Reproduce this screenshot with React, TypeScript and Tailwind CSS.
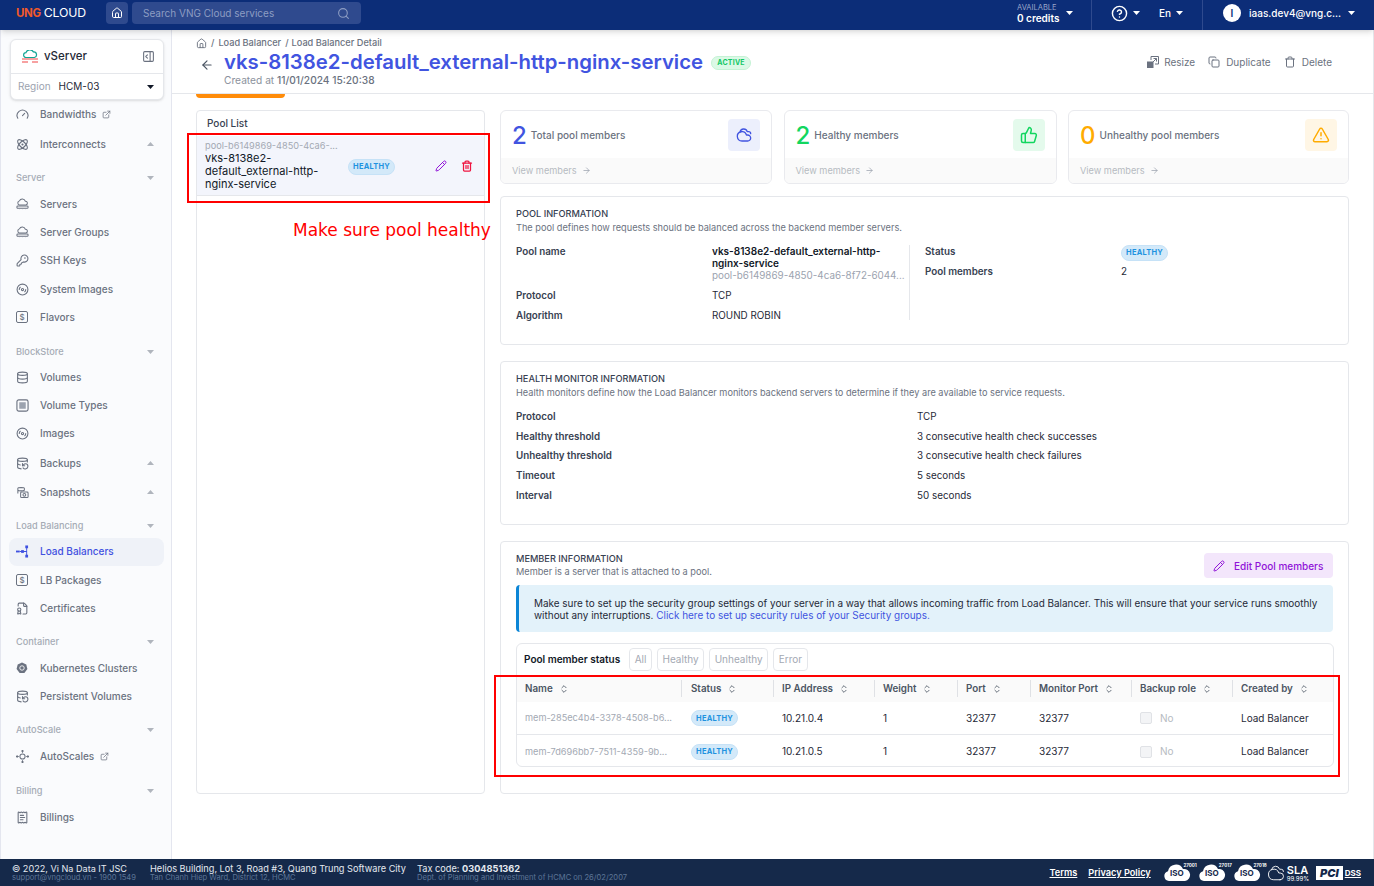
import {
  ArrowLeft,
  ArrowRight,
  Atom,
  ChevronsUpDown,
  CircleHelp,
  Cloudy,
  Copy,
  Database,
  DatabaseBackup,
  Disc3,
  ExternalLink,
  FileBadge,
  Gauge,
  House,
  KeyRound,
  PanelRightOpen,
  Pencil,
  ReceiptText,
  Search,
  ThumbsUp,
  Trash,
  Trash2,
  TriangleAlert,
} from "lucide-react";
import type { ReactNode } from "react";

function Caret({ up, className = "text-[#b0b5bd]" }: { up?: boolean; className?: string }) {
  return (
    <svg width="7" height="4" viewBox="0 0 7 4" className={className}>
      <path d={up ? "M3.5 0 7 4H0z" : "M0 0h7L3.5 4z"} fill="currentColor" />
    </svg>
  );
}

function DollarBox() {
  return (
    <span className="flex size-[12px] items-center justify-center rounded-[2px] border border-[#6b7280] text-[8px] leading-none">
      $
    </span>
  );
}

function CloudServer() {
  return (
    <svg width="13" height="13" viewBox="0 0 14 14" fill="none" stroke="currentColor" strokeWidth="1.1">
      <path d="M3.5 7.5a2.3 2.3 0 0 1 .2-4.4A3.4 3.4 0 0 1 10 3.4a2.1 2.1 0 0 1 .8 4.1z" />
      <rect x="1" y="8.5" width="12" height="2.6" rx="1" />
      <path d="M4 12.5h.1M7 12.5h.1M10 12.5h.1" />
    </svg>
  );
}

function LbIcon({ className = "" }: { className?: string }) {
  return (
    <svg width="13" height="13" viewBox="0 0 14 14" fill="currentColor" className={className}>
      <rect x="0" y="6" width="4" height="2" />
      <rect x="5.5" y="5.5" width="3" height="3" />
      <rect x="10" y="0.5" width="3" height="3" />
      <rect x="10" y="10.5" width="3" height="3" />
      <path d="M4 6.5h8v1H4zM11 3h1v8h-1z" />
    </svg>
  );
}

function K8s() {
  return (
    <svg width="12" height="12" viewBox="0 0 14 14">
      <path d="M7 .5l5 2.4 1.3 5.4-3.5 4.4H4.2L.7 8.3 2 2.9z" fill="#6b7280" />
      <circle cx="7" cy="7" r="2.6" fill="none" stroke="#fff" strokeWidth="1" />
    </svg>
  );
}

function Snapshot() {
  return (
    <svg width="13" height="13" viewBox="0 0 14 14" fill="none" stroke="currentColor" strokeWidth="1.1">
      <path d="M2 8V2.5C2 1.5 9 1.5 9 2.5V5M2 4.5c1 1 6 1 7 0" />
      <rect x="5" y="6.5" width="8" height="6" rx="1" />
      <circle cx="9" cy="9.5" r="1.5" />
    </svg>
  );
}

function Drive() {
  return (
    <svg width="13" height="13" viewBox="0 0 14 14" fill="none" stroke="currentColor" strokeWidth="1.2">
      <rect x="1" y="1" width="12" height="12" rx="2" />
      <rect x="3.5" y="3.5" width="7" height="7" fill="#9ca3af" stroke="none" />
    </svg>
  );
}

function AutoScaleIcon() {
  return (
    <svg width="13" height="13" viewBox="0 0 14 14" fill="none" stroke="currentColor" strokeWidth="1.1">
      <circle cx="7" cy="7" r="2.8" />
      <path d="M7 0v3M7 11v3M0 7h3M11 7h3M5.8 1.6 7 .4l1.2 1.2M5.8 12.4 7 13.6l1.2-1.2M1.6 5.8.4 7l1.2 1.2M12.4 5.8 13.6 7l-1.2 1.2" />
    </svg>
  );
}

function ResizeIcon() {
  return (
    <svg width="12" height="12" viewBox="0 0 12 12" fill="none" stroke="currentColor" strokeWidth="1">
      <path d="M4 4V.5h7.5V8H8" />
      <rect x="0.5" y="6" width="5.5" height="5.5" fill="currentColor" />
      <path d="M6 6l3.5-3.5M6.5 2.5h3v3" />
    </svg>
  );
}

type Row =
  | { kind: "section"; label: string; mt: string }
  | { kind: "item"; label: string; icon: ReactNode; mt: string; link?: boolean; caret?: boolean; active?: boolean };

const ic = "size-[13px]";
const nav: Row[] = [
  { kind: "item", label: "Bandwidths", icon: <Gauge className={ic} />, mt: "", link: true },
  { kind: "item", label: "Interconnects", icon: <Atom className={ic} />, mt: "mt-0.5", caret: true },
  { kind: "section", label: "Server", mt: "mt-[7px]" },
  { kind: "item", label: "Servers", icon: <CloudServer />, mt: "mt-px" },
  { kind: "item", label: "Server Groups", icon: <CloudServer />, mt: "" },
  { kind: "item", label: "SSH Keys", icon: <KeyRound className={ic} />, mt: "" },
  { kind: "item", label: "System Images", icon: <Disc3 className={ic} />, mt: "mt-px" },
  { kind: "item", label: "Flavors", icon: <DollarBox />, mt: "" },
  { kind: "section", label: "BlockStore", mt: "mt-2" },
  { kind: "item", label: "Volumes", icon: <Database className={ic} />, mt: "" },
  { kind: "item", label: "Volume Types", icon: <Drive />, mt: "" },
  { kind: "item", label: "Images", icon: <Disc3 className={ic} />, mt: "" },
  { kind: "item", label: "Backups", icon: <DatabaseBackup className={ic} />, mt: "mt-0.5", caret: true },
  { kind: "item", label: "Snapshots", icon: <Snapshot />, mt: "mt-px", caret: true },
  { kind: "section", label: "Load Balancing", mt: "mt-[7px]" },
  { kind: "item", label: "Load Balancers", icon: <LbIcon />, mt: "", active: true },
  { kind: "item", label: "LB Packages", icon: <DollarBox />, mt: "mt-px" },
  { kind: "item", label: "Certificates", icon: <FileBadge className={ic} />, mt: "" },
  { kind: "section", label: "Container", mt: "mt-[7px]" },
  { kind: "item", label: "Kubernetes Clusters", icon: <K8s />, mt: "mt-px" },
  { kind: "item", label: "Persistent Volumes", icon: <DatabaseBackup className={ic} />, mt: "" },
  { kind: "section", label: "AutoScale", mt: "mt-[7px]" },
  { kind: "item", label: "AutoScales", icon: <AutoScaleIcon />, mt: "mt-px", link: true },
  { kind: "section", label: "Billing", mt: "mt-2" },
  { kind: "item", label: "Billings", icon: <ReceiptText className={ic} />, mt: "mt-px" },
];

function Sidebar() {
  return (
    <aside className="w-[172px] shrink-0 border-x border-[#e4e6ef] bg-[#fafbfd] pl-[8px] pr-[7px] pt-[9px]">
      <div className="ml-px w-[154px] rounded-md border border-[#e5e7eb] bg-white shadow-sm">
        <div className="flex h-[34px] items-center border-b border-[#e5e7eb] pl-[10px] pr-[8px]">
          <svg width="18" height="14" viewBox="0 0 18 14" fill="none">
            <path d="M5 7.5a2.4 2.4 0 0 1 0-4.8A4 4 0 0 1 12.4 2a2.8 2.8 0 0 1 1 5.5z" stroke="#12a594" strokeWidth="1.2" />
            <path d="M1 9h16M1 12h6M11 12h6" stroke="#ef4444" strokeWidth="1.2" />
          </svg>
          <span className="ml-[5px] text-[11.5px] font-medium text-[#1f2937]">vServer</span>
          <PanelRightOpen className="ml-auto size-[13px] text-[#6b7280]" />
        </div>
        <div className="flex h-[25px] items-center pl-[7px] pr-[9px] text-[10px]">
          <span className="text-[#9ca3af]">Region</span>
          <span className="ml-2 text-[#1f2937]">HCM-03</span>
          <Caret className="ml-auto text-[#111827]" />
        </div>
      </div>
      <nav className="mt-px">
        {nav.map((row) =>
          row.kind === "section" ? (
            <div key={row.label} className={`flex h-6 items-center pl-[7px] pr-[10px] text-[9.2px] font-medium text-[#a5abb5] ${row.mt}`}>
              {row.label}
              <Caret className="ml-auto text-[#b0b5bd]" />
            </div>
          ) : (
            <div
              key={row.label}
              className={`flex h-7 items-center rounded-lg pb-[2px] pl-[7px] pr-[10px] text-[10px] font-medium ${row.mt} ${row.active ? "bg-[#eff2f8] text-[#3f51e0]" : "text-[#6b7280]"}`}
            >
              <span className="flex w-[24px] shrink-0 items-center">{row.icon}</span>
              {row.label}
              {row.link && <ExternalLink className="ml-[6px] size-[9px]" />}
              {row.caret && <Caret up className="ml-auto text-[#b0b5bd]" />}
            </div>
          ),
        )}
      </nav>
    </aside>
  );
}

function TopBar() {
  return (
    <header className="relative z-10 flex h-[30px] shrink-0 items-center bg-[#0c2d78] pb-[4px] text-white shadow-md">
      <div className="ml-[16px] flex w-[72px] items-baseline leading-none">
        <span className="text-[11.5px] font-bold tracking-[-0.4px] text-[#f0592b]">UNG</span>
        <span className="ml-[3px] text-[12.3px] font-normal tracking-[-0.1px]">CLOUD</span>
      </div>
      <div className="ml-[18px] flex size-[22px] items-center justify-center rounded bg-[#2f4a8e]">
        <House className="size-[12px]" />
      </div>
      <div className="ml-1 flex h-[22px] w-[229px] items-center justify-between rounded bg-[#2f4a8e] px-[11px] text-[10px] text-[#8d9dc3]">
        Search VNG Cloud services
        <Search className="size-[13px]" />
      </div>
      <div className="ml-[656px] flex h-full w-[74px] items-center gap-[7px]">
        <div className="leading-none">
          <div className="translate-y-px text-[7.5px] text-[#99a6c9]">AVAILABLE</div>
          <div className="mt-[2px] text-[10px] font-semibold">0 credits</div>
        </div>
        <Caret className="text-white" />
      </div>
      <div className="flex h-[30px] w-[112px] items-center self-start border-x border-[#2f4a8e] pb-[4px] pl-[19px]">
        <CircleHelp className="size-[17px]" />
        <Caret className="ml-[5px] text-white" />
        <span className="ml-[19px] text-[10px] font-medium">En</span>
        <Caret className="ml-[5px] text-white" />
      </div>
      <div className="flex items-center pl-[20px]">
        <span className="flex size-[18px] items-center justify-center rounded-full bg-white text-[10px] font-semibold text-[#0c2d78]">I</span>
        <span className="ml-2 w-[90px] text-[10px] font-medium">iaas.dev4@vng.c...</span>
        <Caret className="ml-[9px] text-white" />
      </div>
    </header>
  );
}

function Badge() {
  return (
    <span className="inline-flex h-[16px] w-[47px] items-center justify-center rounded-full border border-[#c6e2f7] bg-[#d3e9f9] text-[7.5px] font-bold tracking-[0.2px] text-[#1f93e0]">
      HEALTHY
    </span>
  );
}

function TitleBar() {
  return (
    <div className="flex h-[64px] shrink-0 border-b border-[#e5e7eb] pl-[24px] pr-[41px]">
      <div>
        <div className="mt-[7px] flex h-[12px] items-center text-[9.2px] font-medium text-[#6b7280]">
          <House className="size-[11px]" />
          <span className="ml-[4px]">/</span>
          <span className="ml-[4px]">Load Balancer</span>
          <span className="ml-[4px]">/</span>
          <span className="ml-[3px]">Load Balancer Detail</span>
        </div>
        <div className="flex">
          <ArrowLeft className="mt-[9px] ml-[4px] size-[14px] text-[#4b5563]" />
          <div className="ml-[10px]">
            <div className="flex items-center">
              <h1 className="text-[20.35px] leading-[26px] font-semibold text-[#4154e0]">
                vks-8138e2-default_external-http-nginx-service
              </h1>
              <span className="ml-[8px] mt-[2px] inline-flex h-[14px] w-[40px] items-center justify-center rounded-full border border-[#c5f3d5] bg-[#dbf9e6] text-[7px] font-bold tracking-[0.2px] text-[#12c765]">
                ACTIVE
              </span>
            </div>
            <div className="-mt-px text-[10.2px] leading-[12px] text-[#8b929c]">
              Created at <span className="font-medium text-[#6b7280]">11/01/2024 15:20:38</span>
            </div>
          </div>
        </div>
      </div>
      <div className="ml-auto mt-px flex items-center gap-[13px] text-[10px] text-[#6b7280]">
        <span className="flex items-center gap-[5px]"><ResizeIcon />Resize</span>
        <span className="flex items-center gap-[6px]"><Copy className="size-[12px]" />Duplicate</span>
        <span className="flex items-center gap-[6px]"><Trash className="size-[12px]" />Delete</span>
      </div>
    </div>
  );
}

function PoolList() {
  return (
    <div className="h-[684px] rounded border border-[#e5e7eb] bg-white">
      <div className="flex h-[25px] items-center pl-[10px] text-[10px] font-medium text-[#374151]">Pool List</div>
      <div className="flex h-[60px] items-center border-b border-[#e5e7eb] bg-[#f3f5fc] pl-[8px] pr-[11px]">
        <div className="-mt-[2px] w-[143px] text-[11px] leading-[13px] text-[#111827]">
          <div className="truncate text-[9.2px] text-[#a3a9b3]">pool-b6149869-4850-4ca6-...</div>
          vks-8138e2-default_external-http-nginx-service
        </div>
        <div className="mt-[3px] flex"><Badge /></div>
        <Pencil className="ml-[40px] size-[12px] text-[#9013d8]" />
        <Trash2 className="ml-[14px] size-[12px] stroke-[2.5] text-[#ef1440]" />
      </div>
    </div>
  );
}

function Stat({ n, color, label, icon, tint }: { n: string; color: string; label: string; icon: ReactNode; tint: string }) {
  return (
    <div className="overflow-hidden rounded-md border border-[#e9eaee] bg-white">
      <div className="flex h-[47px] items-center pl-[11px] pr-[11px]">
        <span className={`translate-y-px text-[24px] leading-none font-medium ${color}`}>{n}</span>
        <span className="ml-[4px] translate-y-px text-[10px] font-medium text-[#6b7280]">{label}</span>
        <span className={`ml-auto flex size-[32px] items-center justify-center rounded ${tint}`}>{icon}</span>
      </div>
      <div className="flex h-[25px] items-center gap-[5px] bg-[#fafafa] pl-[11px] text-[9.2px] text-[#b6bac1]">
        View members <ArrowRight className="size-[9px] text-[#9ca3af]" />
      </div>
    </div>
  );
}

function CardHead({ title, desc, tight }: { title: string; desc: string; tight?: boolean }) {
  return (
    <>
      <div className="text-[9.2px] leading-[12px] font-medium text-[#374151]">{title}</div>
      <div className={`text-[9.2px] leading-[12px] text-[#6b7280] ${tight ? "mt-px" : "mt-[2px]"}`}>{desc}</div>
    </>
  );
}

function PoolInfo() {
  const label = "translate-y-px text-[9.8px] font-semibold text-[#374151]";
  return (
    <div className="mt-3 h-[149px] rounded border border-[#e5e7eb] bg-white pl-[15px] pr-[15px] pt-[11px]">
      <CardHead title="POOL INFORMATION" desc="The pool defines how requests should be balanced across the backend member servers." />
      <div className="mt-[11px] flex text-[9.85px] leading-[12px] text-[#1f2937]">
        <div className="grid h-[75px] w-[394px] grid-cols-[196px_1fr] content-start border-r border-[#e5e7eb]">
          <div className={label}>Pool name</div>
          <div>
            <div className="w-[180px] text-[10px] font-semibold text-[#111827]">vks-8138e2-default_external-http-nginx-service</div>
            <div className="truncate text-[#9ca3af]">pool-b6149869-4850-4ca6-8f72-6044...</div>
          </div>
          <div className={`mt-[8px] ${label}`}>Protocol</div>
          <div className="mt-[8px]">TCP</div>
          <div className={`mt-[8px] ${label}`}>Algorithm</div>
          <div className="mt-[8px]">ROUND ROBIN</div>
        </div>
        <div className="ml-[15px] grid grid-cols-[196px_1fr] content-start">
          <div className={label}>Status</div>
          <div className="h-[12px]"><Badge /></div>
          <div className={`mt-[8px] ${label}`}>Pool members</div>
          <div className="mt-[8px]">2</div>
        </div>
      </div>
    </div>
  );
}

function HealthInfo() {
  const rows = [
    ["Protocol", "TCP"],
    ["Healthy threshold", "3 consecutive health check successes"],
    ["Unhealthy threshold", "3 consecutive health check failures"],
    ["Timeout", "5 seconds"],
    ["Interval", "50 seconds"],
  ];
  return (
    <div className="mt-4 h-[164px] rounded border border-[#e5e7eb] bg-white pl-[15px] pt-[11px]">
      <CardHead title="HEALTH MONITOR INFORMATION" desc="Health monitors define how the Load Balancer monitors backend servers to determine if they are available to service requests." />
      <div className="mt-[11px] grid grid-cols-[401px_1fr] gap-y-[7.7px] text-[9.85px] leading-[12px] text-[#1f2937]">
        {rows.map(([k, v]) => (
          <div key={k} className="contents">
            <div className="translate-y-px text-[9.8px] font-semibold text-[#374151]">{k}</div>
            <div>{v}</div>
          </div>
        ))}
      </div>
    </div>
  );
}

const cols = "grid grid-cols-[165px_92px_101px_83px_73px_101px_101px_1fr]";
const heads = ["Name", "Status", "IP Address", "Weight", "Port", "Monitor Port", "Backup role", "Created by"];
const members = [
  { id: "mem-285ec4b4-3378-4508-b6...", ip: "10.21.0.4" },
  { id: "mem-7d696bb7-7511-4359-9b...", ip: "10.21.0.5" },
];

function MemberTable() {
  return (
    <div className="-mr-px mt-[11px] overflow-hidden rounded-md border border-[#e5e7eb] bg-white">
      <div className="flex h-[31px] items-center pl-[7px] text-[10px]">
        <span className="font-semibold text-[#111827]">Pool member status</span>
        <div className="ml-[9px] flex gap-[5px] text-[#a3a9b3]">
          {["All", "Healthy", "Unhealthy", "Error"].map((t) => (
            <span key={t} className="flex h-[23px] items-center rounded border border-[#e5e7eb] px-[4.5px]">{t}</span>
          ))}
        </div>
      </div>
      <div className={`${cols} h-[27px] items-center bg-[#fafafa] text-[9.8px] font-semibold text-[#4b5563]`}>
        {heads.map((h, i) => (
          <div key={h} className={`flex h-[17px] items-center ${i === 1 ? "pl-[9px]" : "pl-[8px]"} ${i < heads.length - 1 ? "border-r border-[#dfe1e5]" : ""}`}>
            <span className="translate-y-px">{h}</span>
            <ChevronsUpDown className="ml-[6px] size-[10px]" />
          </div>
        ))}
      </div>
      {members.map((m, i) => (
        <div key={m.id} className={`${cols} items-center text-[10px] text-[#1f2937] ${i === 0 ? "h-[33px] border-b border-[#e5e7eb]" : "h-[31px] pt-[2px]"}`}>
          <div className="truncate pl-[8px] text-[9.2px] text-[#a3a9b3]">{m.id}</div>
          <div className="pl-[9px]"><Badge /></div>
          <div className="pl-[8px]">{m.ip}</div>
          <div className="pl-[8px]">1</div>
          <div className="pl-[8px]">32377</div>
          <div className="pl-[8px]">32377</div>
          <div className="flex items-center gap-[8px] pl-[8px] text-[#b6bac1]">
            <span className="size-[12px] rounded-[2px] border border-[#e0e2e6] bg-[#f3f4f6]" />
            No
          </div>
          <div className="pl-[8px]">Load Balancer</div>
        </div>
      ))}
    </div>
  );
}

function MemberInfo() {
  return (
    <div className="mt-4 h-[253px] rounded border border-[#e5e7eb] bg-white px-[15px] pt-[11px]">
      <div className="flex h-[32px] items-start justify-between">
        <div>
          <CardHead tight title="MEMBER INFORMATION" desc="Member is a server that is attached to a pool." />
        </div>
        <div className="flex h-[25px] w-[129px] items-center rounded bg-[#f3e6fb] pl-[9px] pt-px text-[10px] font-medium text-[#9013d8]">
          <Pencil className="mr-[9px] size-[12px]" />
          Edit Pool members
        </div>
      </div>
      <div className="h-[47px] rounded border-l-[3px] border-[#0b85d6] bg-[#e3f2fa] pl-[15px] pt-[12px] text-[9.94px] leading-[12px] text-[#1f2937]">
        <div>Make sure to set up the security group settings of your server in a way that allows incoming traffic from Load Balancer. This will ensure that your service runs smoothly</div>
        <div>
          without any interruptions. <span className="text-[#4154e0]">Click here to set up security rules of your Security groups.</span>
        </div>
      </div>
      <MemberTable />
    </div>
  );
}

function Iso({ code }: { code: string }) {
  return (
    <span className="relative flex h-[20px] w-[34px] items-center justify-center">
      <svg width="28" height="18" viewBox="0 0 28 18" className="absolute left-0 top-[1px]" fill="#fff">
        <path d="M6 17a5 5 0 0 1-1-9.8A8 8 0 0 1 20 5a6 6 0 0 1 2 12z" />
      </svg>
      <span className="relative -ml-[6px] text-[8px] font-bold text-[#15294a]">ISO</span>
      <span className="absolute right-0 top-0 text-[4.5px] font-bold text-white">{code}</span>
    </span>
  );
}

function Footer() {
  return (
    <footer className="flex h-[27px] shrink-0 items-center bg-[#15294a] pl-[12px] pr-[13px] pt-px text-[#e5e9f0]">
      <div className="w-[138px] leading-none">
        <div className="text-[9.1px]">© 2022, Vi Na Data IT JSC</div>
        <div className="mt-[1px] text-[7.6px] text-[#5d7596]">support@vngcloud.vn - 1900 1549</div>
      </div>
      <div className="w-[267px] leading-none">
        <div className="text-[9.2px]">Helios Building, Lot 3, Road #3, Quang Trung Software City</div>
        <div className="mt-[1px] text-[7.6px] text-[#5d7596]">Tan Chanh Hiep Ward, District 12, HCMC</div>
      </div>
      <div className="leading-none">
        <div className="text-[9.2px]">Tax code: <span className="font-bold">0304851362</span></div>
        <div className="mt-[1px] text-[7.6px] text-[#5d7596]">Dept. of Planning and Investment of HCMC on 26/02/2007</div>
      </div>
      <div className="ml-auto flex items-center text-white">
        <span className="text-[9.2px] font-semibold underline">Terms</span>
        <span className="ml-[11px] text-[9.2px] font-semibold underline">Privacy Policy</span>
        <div className="ml-[12px] flex items-center gap-[1px]">
          <Iso code="27001" />
          <Iso code="27017" />
          <Iso code="27018" />
        </div>
        <div className="flex items-center gap-[2px]">
          <Cloudy className="size-[18px] stroke-[1.2]" />
          <div className="leading-none">
            <div className="text-[11px] font-semibold">SLA</div>
            <div className="text-[6px]">99.99%</div>
          </div>
        </div>
        <div className="ml-[7px] flex items-center gap-[2px]">
          <span className="bg-white px-[4px] text-[11px] leading-[14px] font-black italic text-[#15294a]">PCI</span>
          <span className="text-[8px] font-bold underline">DSS</span>
        </div>
      </div>
    </footer>
  );
}

export default function App() {
  return (
    <div className="relative flex h-[886px] w-[1374px] flex-col overflow-hidden bg-white font-['Inter',sans-serif]">
      <TopBar />
      <div className="flex min-h-0 flex-1">
        <Sidebar />
        <main className="min-w-0 flex-1 border-r border-[#e5e7eb]">
          <TitleBar />
          <div className="pl-[24px]">
            <div className="h-1 w-[89px] rounded-b bg-[#ff8c0a]" />
            <div className="mt-3 grid grid-cols-[289px_849px] gap-x-[15px]">
              <PoolList />
              <div>
                <div className="grid grid-cols-[272px_273px_281px] gap-x-[11.5px]">
                  <Stat n="2" color="text-[#4154e0]" label="Total pool members" tint="bg-[#eceffc]" icon={<Cloudy className="size-[16px] text-[#4154e0]" />} />
                  <Stat n="2" color="text-[#12d65f]" label="Healthy members" tint="bg-[#e4faec]" icon={<ThumbsUp className="size-[18px] text-[#12d65f]" />} />
                  <Stat n="0" color="text-[#ffab00]" label="Unhealthy pool members" tint="bg-[#fff6e5]" icon={<TriangleAlert className="size-[18px] text-[#ffab00]" />} />
                </div>
                <PoolInfo />
                <HealthInfo />
                <MemberInfo />
              </div>
            </div>
          </div>
        </main>
      </div>
      <Footer />

      {/* review annotations drawn over the page */}
      <div className="absolute left-[187px] top-[133px] h-[70px] w-[303px] border-2 border-[#f00]" />
      <div className="absolute left-[293px] top-[218px] font-['DejaVu_Sans',sans-serif] text-[17px] leading-[24px] text-[#f00]">Make sure pool healthy</div>
      <div className="absolute left-[494px] top-[675px] h-[102px] w-[846px] border-2 border-[#f00]" />
    </div>
  );
}
